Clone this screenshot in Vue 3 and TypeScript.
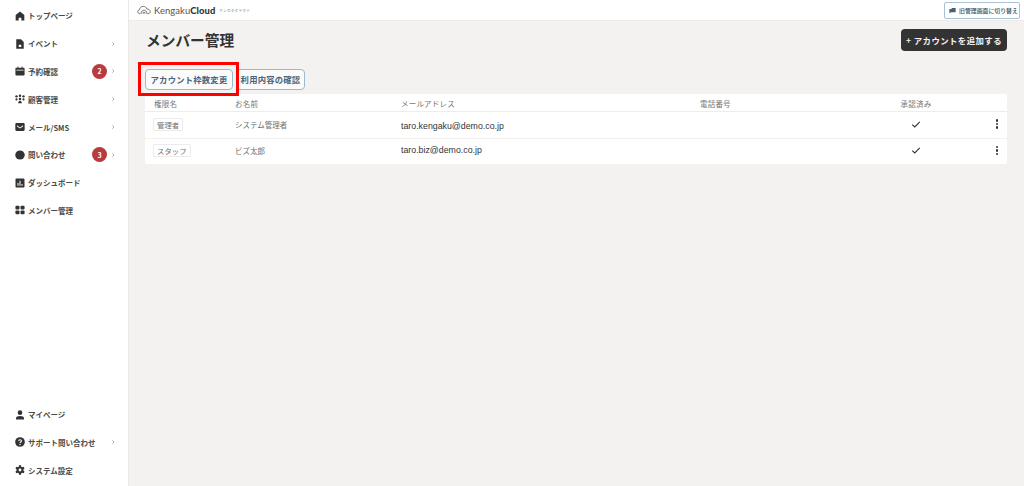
<script setup lang="ts">
interface NavItem { label: string; icon: string; badge?: number; chevron?: boolean }
const topNav: NavItem[] = [
  { label: 'トップページ', icon: 'home' },
  { label: 'イベント', icon: 'doc', chevron: true },
  { label: '予約確認', icon: 'cal', badge: 2, chevron: true },
  { label: '顧客管理', icon: 'people', chevron: true },
  { label: 'メール/SMS', icon: 'mail', chevron: true },
  { label: '問い合わせ', icon: 'chat', badge: 3, chevron: true },
  { label: 'ダッシュボード', icon: 'chart' },
  { label: 'メンバー管理', icon: 'grid' },
]
const bottomNav: NavItem[] = [
  { label: 'マイページ', icon: 'user' },
  { label: 'サポート問い合わせ', icon: 'help', chevron: true },
  { label: 'システム設定', icon: 'gear' },
]
const members = [
  { role: '管理者', name: 'システム管理者', email: 'taro.kengaku@demo.co.jp' },
  { role: 'スタッフ', name: 'ビズ太郎', email: 'taro.biz@demo.co.jp' },
]
</script>

<template>
  <div class="app">
    <aside class="side">
      <nav class="nav">
        <a v-for="n in topNav" :key="n.label" class="item">
          <svg class="ico" viewBox="0 0 12 12">
            <path v-if="n.icon === 'home'" d="M6 .6 11.200 4.800V11.400H7.600V8H4.400v3.400H.8V4.800z" />
            <path v-else-if="n.icon === 'doc'" fill-rule="evenodd" d="M1.500.4h5.700L10.500 3.700v8H1.500zM4.500 7v2.700h3V7z" />
            <path v-else-if="n.icon === 'cal'" fill-rule="evenodd" d="M3 .5h1V2h4V.5h1V2h1.200c.7 0 1.300.5 1.300 1.200v7c0 .8-.6 1.300-1.300 1.300H1.800c-.7 0-1.300-.5-1.300-1.300v-7C.5 2.500 1.100 2 1.800 2H3zM1.700 4.600v.9h8.600v-.9z" />
            <g v-else-if="n.icon === 'people'">
              <circle cx="1.800" cy="2.800" r="1.400" /><circle cx="6" cy="2.200" r="1.500" /><circle cx="10.200" cy="2.800" r="1.400" />
              <circle cx="1.800" cy="6.500" r="1.300" /><circle cx="10.200" cy="6.500" r="1.300" /><circle cx="6" cy="6" r="1.500" />
              <path d="M3.800 11.200c0-2 1-3.100 2.200-3.100s2.200 1.100 2.200 3.100z" />
            </g>
            <path v-else-if="n.icon === 'mail'" fill-rule="evenodd" d="M1.800 1.200h8.400c.8 0 1.400.6 1.400 1.400v6.800c0 .8-.6 1.400-1.400 1.400H1.800c-.8 0-1.400-.6-1.400-1.400V2.600c0-.8.6-1.400 1.400-1.400zM2.400 4l3.600 2.500L9.600 4v1.300L6 7.800 2.400 5.300z" />
            <ellipse v-else-if="n.icon === 'chat'" cx="6" cy="6" rx="5.700" ry="5.400" />
            <path v-else-if="n.icon === 'chart'" fill-rule="evenodd" d="M1.800.6h8.400c.7 0 1.200.5 1.200 1.200v8.400c0 .7-.5 1.200-1.200 1.200H1.800c-.7 0-1.200-.5-1.200-1.200V1.800C.6 1.100 1.100.6 1.800.6zM3 6v3.200h1.200V6zM5.400 3.200v6h1.200v-6zM7.800 7.200v2H9v-2z" />
            <g v-else-if="n.icon === 'grid'">
              <rect x=".5" y=".8" width="4.900" height="4.600" rx="1.300" /><rect x="6.600" y=".8" width="4.900" height="4.600" rx="1.300" />
              <rect x=".5" y="6.600" width="4.900" height="4.600" rx="1.300" /><rect x="6.600" y="6.600" width="4.900" height="4.600" rx="1.300" />
            </g>
          </svg>
          <span class="lbl">{{ n.label }}</span>
          <span v-if="n.badge" class="badge">{{ n.badge }}</span>
          <svg v-if="n.chevron" class="chev" viewBox="0 0 6 8"><path d="M2 1.500 4.500 4 2 6.500" /></svg>
        </a>
      </nav>
      <nav class="nav">
        <a v-for="n in bottomNav" :key="n.label" class="item">
          <svg class="ico" viewBox="0 0 12 12">
            <g v-if="n.icon === 'user'">
              <circle cx="6" cy="3.200" r="2.800" /><path d="M1.200 11.400V9.800C1.200 8.200 3 7.200 6 7.200s4.800 1 4.800 2.600v1.600z" />
            </g>
            <g v-else-if="n.icon === 'help'">
              <circle cx="6" cy="6" r="5.800" />
              <path class="q" d="M4.300 4.700C4.400 3.700 5.100 3.200 6 3.200c1.100 0 1.800.7 1.800 1.500 0 1.200-1.800 1.300-1.800 2.500" />
              <circle class="qd" cx="6" cy="9" r=".8" />
            </g>
            <path v-else fill-rule="evenodd" d="M4.800.3h2.400l.3 1.700 1.200.6 1.600-.6 1.200 2-1.300 1.200v1.600l1.300 1.200-1.200 2-1.600-.6-1.200.6-.3 1.700H4.800l-.3-1.700-1.200-.6-1.600.6-1.200-2 1.300-1.200V5.200L.5 4l1.200-2 1.600.6 1.200-.6zM6 4.300a1.700 1.700 0 1 0 0 3.400 1.700 1.700 0 0 0 0-3.400z" />
          </svg>
          <span class="lbl">{{ n.label }}</span>
          <svg v-if="n.chevron" class="chev" viewBox="0 0 6 8"><path d="M2 1.500 4.500 4 2 6.500" /></svg>
        </a>
      </nav>
    </aside>

    <div class="main">
      <header class="top">
        <div class="logo">
          <svg class="cloud" viewBox="0 0 18 12">
            <path d="M4.500 10.800H3.600C2 10.800 1 9.700 1 8.300 1 7 1.900 6 3.200 5.800 3.500 3.200 5.400 1.300 8 1.300c2.300 0 4.100 1.400 4.700 3.500 2.300-.2 4.300 1.200 4.300 3.300 0 1.600-1.200 2.700-2.800 2.700h-1" />
            <path d="M5.500 10.800V8.300L9 5.800l3.500 2.500v2.500" />
            <path d="M8 10.800V9h2v1.800" />
          </svg>
          <span class="brand">Kengaku<b>Cloud</b></span>
          <span class="kana">ケンガククラウド</span>
        </div>
        <button class="switch">
          <svg viewBox="0 0 10 10"><path d="M.5 9V3h2.800l1-1.500h5.200v6H3z" /></svg>
          <span>旧管理画面に切り替え</span>
        </button>
      </header>

      <main class="content">
        <div class="head">
          <h1>メンバー管理</h1>
          <button class="add">+ アカウントを追加する</button>
        </div>

        <div class="actions">
          <button class="outline first">アカウント枠数変更</button>
          <button class="outline second">利用内容の確認</button>
          <span class="mark"></span>
        </div>

        <div class="table">
          <div class="row hdr">
            <span>権限名</span><span>お名前</span><span>メールアドレス</span><span>電話番号</span><span class="ok">承認済み</span><span></span>
          </div>
          <div v-for="m in members" :key="m.email" class="row body">
            <span><em class="role">{{ m.role }}</em></span>
            <span class="name">{{ m.name }}</span>
            <span class="email">{{ m.email }}</span>
            <span></span>
            <span class="ok check">
              <svg viewBox="0 0 12 10"><path d="M1.500 5.200 4.500 8 10.500 1.800" /></svg>
            </span>
            <span class="kebab"><i></i><i></i><i></i></span>
          </div>
        </div>
      </main>
    </div>
  </div>
</template>

<style>
html, body { margin: 0; padding: 0; }
</style>

<style scoped>
.app {
  display: flex;
  width: 1024px;
  height: 486px;
  overflow: hidden;
  background: #f3f2f1;
  color: #333;
  font-family: "Noto Sans CJK JP", "Noto Sans", sans-serif;
}
.side {
  width: 129px;
  flex: none;
  background: #fff;
  border-right: 1px solid #e9e8e7;
  display: flex;
  flex-direction: column;
  justify-content: space-between;
  padding: 2px 0 2px;
  box-sizing: border-box;
}
.item {
  display: flex;
  align-items: center;
  height: 27.8px;
  padding-left: 15px;
  padding-right: 13px;
  font-size: 7.500px;
  font-weight: 700;
  color: #4a4a4a;
}
.ico { width: 10px; height: 10px; margin-right: 3px; fill: #333; flex: none; }
.q { fill: none; stroke: #fff; stroke-width: 1.300; }
.qd { fill: #fff; }
.lbl { flex: 1; white-space: nowrap; }
.badge {
  width: 15px;
  height: 15px;
  border-radius: 50%;
  background: #b83b3f;
  color: #fff;
  font-size: 7px;
  display: flex;
  align-items: center;
  justify-content: center;
  margin-right: 4px;
}
.chev { width: 4px; height: 6px; fill: none; stroke: #888; stroke-width: 1; flex: none; }

.main { flex: 1; min-width: 0; display: flex; flex-direction: column; }
.top {
  height: 21px;
  box-sizing: border-box;
  background: #fff;
  border-bottom: 1px solid #ecebea;
  display: flex;
  align-items: center;
  justify-content: space-between;
  padding: 0 4px 0 8px;
  flex: none;
}
.logo { display: flex; align-items: center; }
.cloud { width: 14px; height: 10px; fill: none; stroke: #555; stroke-width: 1; margin-right: 3px; }
.brand { font-family: "Lato", sans-serif; font-size: 9.400px; color: #555; letter-spacing: .1px; }
.brand b { color: #333; font-weight: 900; }
.kana { font-size: 3.400px; color: #666; margin-left: 4px; letter-spacing: .5px; }
.switch {
  display: flex;
  align-items: center;
  gap: 3px;
  height: 17px;
  width: 76px;
  padding: 0 0 0 4px;
  background: #fff;
  border: 1px solid #a9c3d4;
  border-radius: 2px;
  font-family: inherit;
  font-size: 5.900px;
  font-weight: 500;
  color: #3d4c58;
  white-space: nowrap;
  box-sizing: border-box;
}
.switch svg { width: 7px; height: 7px; fill: #44617a; flex: none; }

.content { padding: 0 17px 0 16px; flex: 1; }
.head {
  display: flex;
  justify-content: space-between;
  align-items: center;
  height: 38px;
}
h1 {
  margin: 0;
  font-size: 14.700px;
  font-weight: 700;
  color: #333;
  line-height: 38px;
  padding-left: 1px;
}
.add {
  width: 106px;
  height: 22px;
  border: none;
  border-radius: 4px;
  background: #333;
  color: #f4f4f4;
  font-family: inherit;
  font-size: 8.400px;
  font-weight: 700;
  letter-spacing: .45px;
  padding: 0;
}
.actions {
  position: relative;
  display: flex;
  gap: 3px;
  margin-top: 10px;
  height: 21px;
}
.outline {
  height: 21px;
  background: #fbfbfb;
  border: 1px solid #9db8c9;
  border-radius: 4px;
  font-family: inherit;
  font-size: 8.300px;
  font-weight: 700;
  color: #4c6478;
  letter-spacing: .25px;
  padding: 0 0 1px;
  box-sizing: border-box;
}
.first { width: 88px; }
.second { width: 69px; }
.mark {
  position: absolute;
  left: -7px;
  top: -7px;
  width: 101px;
  height: 34px;
  border: 3px solid #f00;
  box-sizing: border-box;
}
.table {
  margin-top: 4px;
  background: #fff;
  border-radius: 2px;
}
.row {
  display: grid;
  grid-template-columns: 81px 166px 299px 200px 1fr 23px;
  padding-left: 9px;
  align-items: center;
}
.hdr {
  height: 18px;
  padding-top: 1px;
  font-size: 7.500px;
  color: #777;
  letter-spacing: .2px;
  border-bottom: 1px solid #eeedec;
  box-sizing: border-box;
}
.body {
  height: 26px;
  padding-bottom: 2px;
  box-sizing: border-box;
  font-size: 7.500px;
  color: #707070;
}
.body + .body { border-top: 1px solid #f2f1f0; }
.ok { width: 32px; text-align: center; white-space: nowrap; }
.role {
  display: inline-block;
  font-style: normal;
  font-size: 7.400px;
  line-height: 11px;
  padding: 0 3px;
  margin-left: -1px;
  color: #707070;
  border: 1px solid #eceaea;
  border-radius: 2px;
}
.email {
  font-family: "Liberation Sans", sans-serif;
  font-size: 8.800px;
  color: #333;
  margin-top: 4px;
}
.body + .body .email { margin-top: -2px; }
.check { display: flex; justify-content: center; }
.check svg { width: 10px; height: 9px; fill: none; stroke: #333; stroke-width: 1.300; }
.kebab {
  display: flex;
  flex-direction: column;
  align-items: center;
  gap: 1.200px;
  width: 6px;
  justify-self: center;
  margin-left: 3px;
}
.kebab i { width: 2.400px; height: 2.400px; border-radius: 50%; background: #333; }
</style>
